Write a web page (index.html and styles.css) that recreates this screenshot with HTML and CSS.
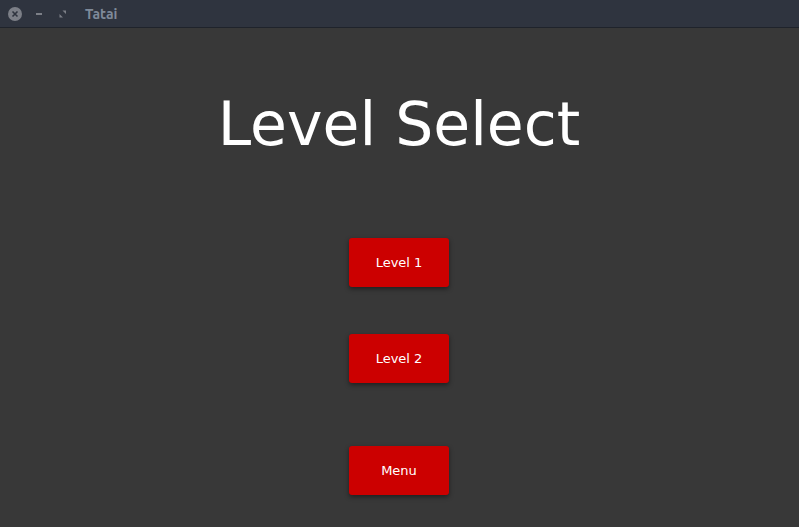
FILE: index.html
```html
<!DOCTYPE html>
<html>
<head>
<meta charset="utf-8">
<link rel="stylesheet" href="styles.css">
</head>
<body>
<div class="window">
  <div class="titlebar">
    <span class="tb-close"><svg width="14" height="14" viewBox="0 0 14 14"><circle cx="7" cy="7" r="7" fill="#7c7f87"/><path d="M4.5 4.5 L9.5 9.5 M9.5 4.5 L4.5 9.5" stroke="#2f343f" stroke-width="1.6"/></svg></span>
    <span class="tb-min"><svg width="8" height="8" viewBox="0 0 8 8"><rect x="1" y="3" width="6" height="2" fill="#7c7f87"/></svg></span>
    <span class="tb-max"><svg width="8" height="8" viewBox="0 0 8 8"><path d="M3.5 0.5 L7 0.5 L7 4 Z M0.5 4 L0.5 7.5 L4 7.5 Z" fill="#7c7f87"/></svg></span>
    <span class="tb-title">Tatai</span>
  </div>
  <div class="content">
    <h1 class="heading">Level Select</h1>
    <button class="btn btn-l1">Level 1</button>
    <button class="btn btn-l2">Level 2</button>
    <button class="btn btn-menu">Menu</button>
  </div>
</div>
</body>
</html>
```
FILE: styles.css
```css
html, body {
  margin: 0;
  padding: 0;
  width: 799px;
  height: 527px;
  overflow: hidden;
  background: #383838;
}
.window {
  display: flex;
  flex-direction: column;
  height: 527px;
}
.titlebar {
  height: 27px;
  background: #2f343f;
  border-bottom: 1px solid #1f232b;
  display: flex;
  align-items: center;
  font-family: "Ubuntu", "DejaVu Sans", sans-serif;
}
.tb-close { margin-left: 8px; display: flex; }
.tb-min { margin-left: 13px; display: flex; }
.tb-max { margin-left: 16px; display: flex; }
.tb-title {
  margin-left: 18px;
  font-weight: bold;
  font-size: 14px;
  color: #7f8a9a;
}
.content {
  flex: 1;
  display: flex;
  flex-direction: column;
  align-items: center;
  padding-right: 1px;
}
.heading {
  margin: 61px 0 0 0;
  font-family: "DejaVu Sans", sans-serif;
  font-weight: normal;
  font-size: 60px;
  line-height: 70px;
  color: #ffffff;
}
.btn {
  width: 100px;
  height: 49px;
  border: none;
  border-radius: 3px;
  background: #cc0000;
  color: #ffffff;
  font-family: "DejaVu Sans", sans-serif;
  font-size: 13px;
  box-shadow: 0 2px 5px rgba(0,0,0,0.45);
  padding: 0;
}
.btn-l1 { margin-top: 79px; }
.btn-l2 { margin-top: 47px; }
.btn-menu { margin-top: 63px; }
```
